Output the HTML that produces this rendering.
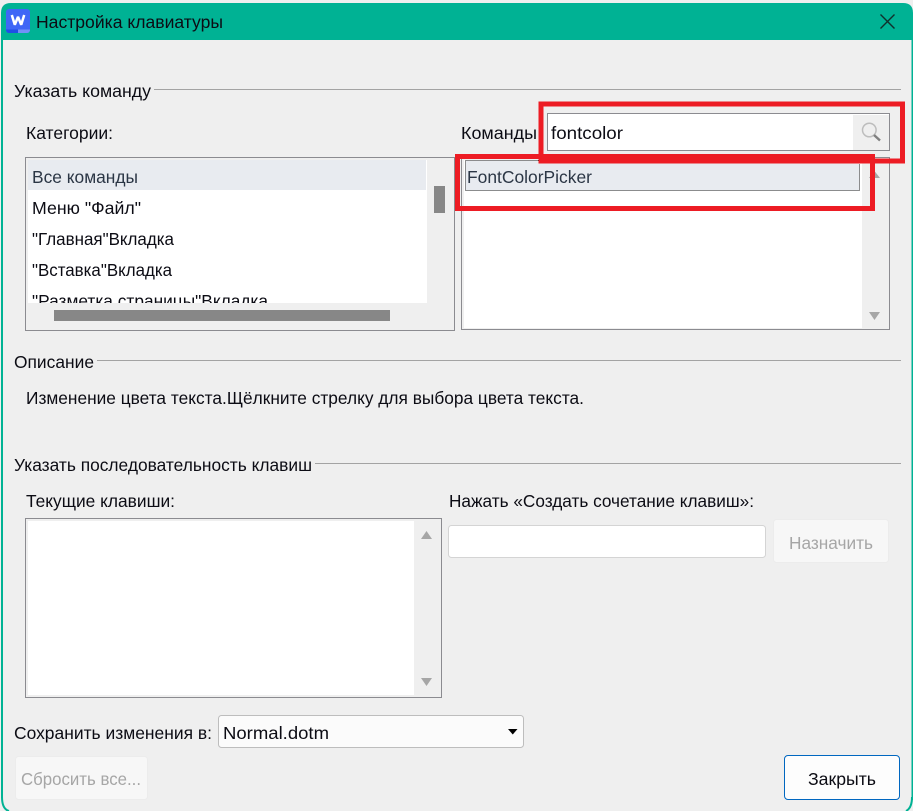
<!DOCTYPE html>
<html lang="ru"><head><meta charset="utf-8"><title>Настройка клавиатуры</title>
<style>
html,body{margin:0;padding:0;width:913px;height:811px;overflow:hidden;background:#efefef}
svg{display:block;position:absolute;left:0;top:0}
text{font-family:"Liberation Sans",sans-serif;font-size:17.5px;fill:#0c0c14}
</style></head><body>
<svg width="913" height="811" viewBox="0 0 913 811" xmlns="http://www.w3.org/2000/svg">
<defs><clipPath id="c"><rect x="28" y="160" width="399" height="143"/></clipPath></defs>
<rect width="913" height="811" fill="#efefef"/>
<!-- window frame -->
<path d="M1 40V13Q1 3 11 3H903Q913 3 913 13V40Z" fill="#00b294"/>
<rect x="1" y="38" width="2" height="760" fill="#00b294"/>
<rect x="911.500" y="38" width="1.500" height="762" fill="#00b294"/>
<path d="M2 797Q2 809 9 811" fill="none" stroke="#00b294" stroke-width="2"/>
<path d="M912 797Q912 808 906 811" fill="none" stroke="#00b294" stroke-width="2"/>
<!-- app icon -->
<rect x="6" y="9" width="24" height="24" rx="3" fill="#3f66f6"/>
<path d="M6 29.500H18V33H9a3 3 0 0 1-3-3Z" fill="#1f4fe6"/>
<path d="M18 29.500H30V30a3 3 0 0 1-3 3H18Z" fill="#7390f8"/>
<path d="M11.800 15L14.800 24.800L18 16.800L21.200 24.800L24.200 15" fill="none" stroke="#fff" stroke-width="2.500" stroke-linejoin="bevel"/>
<text x="36" y="28" textLength="187" lengthAdjust="spacingAndGlyphs">Настройка клавиатуры</text>
<path d="M880.500 14.500L894.500 28.500M894.500 14.500L880.500 28.500" stroke="#10302c" stroke-width="1.400" fill="none"/>
<!-- group separators -->
<rect x="154" y="89" width="747" height="1" fill="#a3a3a3"/>
<rect x="97" y="360" width="804" height="1" fill="#a3a3a3"/>
<rect x="315" y="463" width="586" height="1" fill="#a3a3a3"/>
<text x="14" y="97" textLength="137" lengthAdjust="spacingAndGlyphs">Указать команду</text>
<text x="26" y="139" textLength="87" lengthAdjust="spacingAndGlyphs">Категории:</text>
<text x="461" y="139" textLength="76" lengthAdjust="spacingAndGlyphs">Команды</text>
<!-- categories list -->
<rect x="25.500" y="157.500" width="429" height="173" fill="#efefef" stroke="#8b8b90"/>
<rect x="28" y="160" width="399" height="143" fill="#fff"/>
<rect x="28" y="160" width="398" height="30" fill="#e8ebf0"/>
<g clip-path="url(#c)">
<text x="32" y="183" textLength="106" lengthAdjust="spacingAndGlyphs" style="fill:#2b3645">Все команды</text>
<text x="32" y="214" textLength="109" lengthAdjust="spacingAndGlyphs">Меню "Файл"</text>
<text x="32" y="245" textLength="142" lengthAdjust="spacingAndGlyphs">"Главная"Вкладка</text>
<text x="32" y="276" textLength="140" lengthAdjust="spacingAndGlyphs">"Вставка"Вкладка</text>
<text x="32" y="307" textLength="236" lengthAdjust="spacingAndGlyphs">"Разметка страницы"Вкладка</text>
</g>
<rect x="434" y="186" width="11" height="27" fill="#878787"/>
<rect x="54" y="310" width="336" height="11" fill="#878787"/>
<!-- commands list -->
<rect x="461.500" y="157.500" width="428" height="172" fill="#efefef" stroke="#8b8b90"/>
<rect x="464" y="160" width="398" height="168" fill="#fff"/>
<rect x="465.500" y="160.500" width="394" height="30" fill="#e8ebf0"/>
<rect x="465.500" y="160.500" width="394" height="30" fill="none" stroke="#222" stroke-dasharray="1 1" shape-rendering="crispEdges"/>
<text x="467" y="183" textLength="125" lengthAdjust="spacingAndGlyphs" style="fill:#2b3645">FontColorPicker</text>
<path d="M869 178L874.500 171L880 178Z" fill="#a6a6a6"/>
<path d="M869 312H880L874.500 320Z" fill="#a6a6a6"/>
<!-- search -->
<rect x="547.500" y="113.500" width="342" height="37" fill="#fff" stroke="#8b8b90"/>
<rect x="853" y="115" width="36" height="35" fill="#efefef"/>
<circle cx="869.300" cy="130" r="6.800" fill="none" stroke="#bdbdbd" stroke-width="1.500"/>
<path d="M874 135L880 140.500" stroke="#808080" stroke-width="2.400"/>
<text x="551" y="139" textLength="72" lengthAdjust="spacingAndGlyphs">fontcolor</text>
<!-- red annotations -->
<path d="M541 104H902.500V161H541Z" fill="none" stroke="#ed1c24" stroke-width="5"/>
<path d="M457.500 156.500H872.500V208.500H457.500Z" fill="none" stroke="#ed1c24" stroke-width="5"/>
<!-- description -->
<text x="14" y="368" textLength="80" lengthAdjust="spacingAndGlyphs">Описание</text>
<text x="26" y="404" textLength="558" lengthAdjust="spacingAndGlyphs">Изменение цвета текста.Щёлкните стрелку для выбора цвета текста.</text>
<!-- keys -->
<text x="14" y="471" textLength="298" lengthAdjust="spacingAndGlyphs">Указать последовательность клавиш</text>
<text x="26" y="507" textLength="149" lengthAdjust="spacingAndGlyphs">Текущие клавиши:</text>
<text x="449" y="507" textLength="305" lengthAdjust="spacingAndGlyphs">Нажать «Создать сочетание клавиш»:</text>
<rect x="25.500" y="518.500" width="416" height="179" fill="#efefef" stroke="#8b8b90"/>
<rect x="28" y="521" width="386" height="174" fill="#fff"/>
<path d="M421 539L426.500 531L432 539Z" fill="#a6a6a6"/>
<path d="M421 678H432L426.500 686Z" fill="#a6a6a6"/>
<rect x="448.500" y="525.500" width="317" height="32" rx="3" fill="#fff" stroke="#d4d4d4"/>
<rect x="773.500" y="519.500" width="115" height="43" rx="3" fill="#f7f7f7" stroke="#ececec"/>
<text x="789" y="549" textLength="84" lengthAdjust="spacingAndGlyphs" style="fill:#a6a6a6">Назначить</text>
<!-- bottom -->
<text x="14" y="739" textLength="198" lengthAdjust="spacingAndGlyphs">Сохранить изменения в:</text>
<rect x="218.500" y="715.500" width="305" height="32" rx="3" fill="#fbfbfb" stroke="#bdbdbd"/>
<text x="223" y="739" textLength="106" lengthAdjust="spacingAndGlyphs">Normal.dotm</text>
<path d="M508 729H517.500L512.750 734.500Z" fill="#000"/>
<rect x="15.500" y="756.500" width="132" height="43" rx="3" fill="#f7f7f7" stroke="#ececec"/>
<text x="21" y="785" textLength="120" lengthAdjust="spacingAndGlyphs" style="fill:#a6a6a6">Сбросить все...</text>
<rect x="784.500" y="755.500" width="115" height="44" rx="3.500" fill="#fdfdfd" stroke="#0067c0"/>
<text x="808" y="785" textLength="68" lengthAdjust="spacingAndGlyphs">Закрыть</text>
</svg>
</body></html>
